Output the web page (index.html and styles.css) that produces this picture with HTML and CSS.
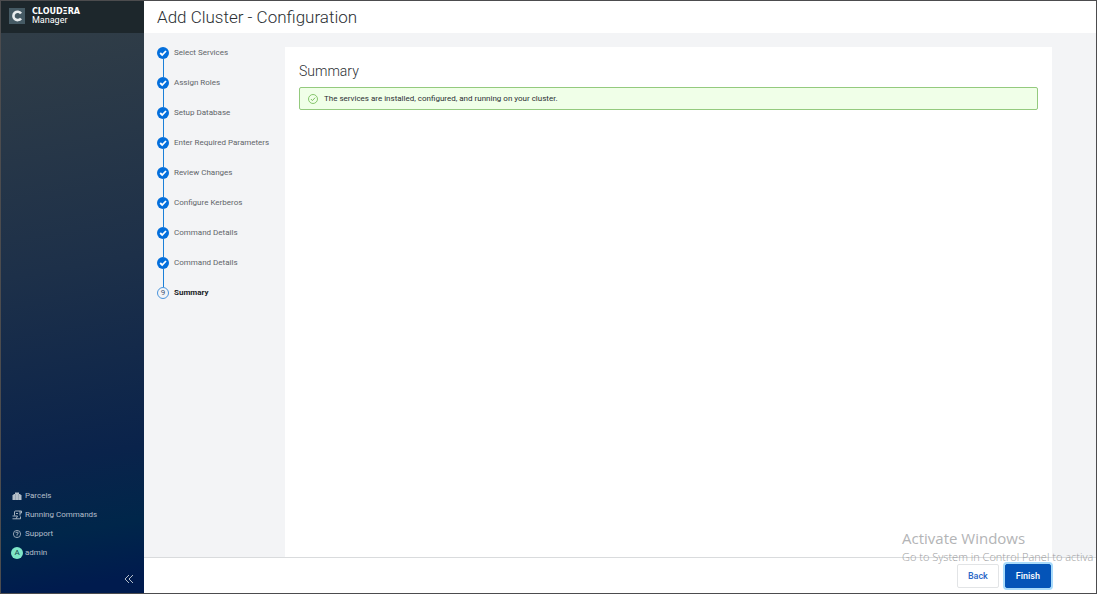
FILE: index.html
```html
<!DOCTYPE html>
<html lang="en">
<head>
<meta charset="utf-8">
<title>Add Cluster - Configuration</title>
<link rel="stylesheet" href="styles.css">
</head>
<body>
<svg class="defs" aria-hidden="true">
  <symbol id="check" viewBox="0 0 12 12"><circle cx="6" cy="6" r="6" fill="#046fdc"/><path d="M3.2 6l2 2 3.8-4" fill="none" stroke="#fff" stroke-width="1.8"/></symbol>
</svg>
<div class="app">
  <aside class="sidebar">
    <div class="brand">
      <svg class="brand-mark" viewBox="0 0 16 16" aria-hidden="true"><rect width="16" height="16" fill="#455a64"/><path d="M12 5.4A4.2 4.2 0 1 0 12 10.4" fill="none" stroke="#e9edef" stroke-width="2.6"/></svg>
      <div class="brand-text"><span class="brand-name">CLOUDΞRA</span><span class="brand-product">Manager</span></div>
    </div>
    <nav class="side-nav">
      <a class="side-link" href="#"><svg class="side-icon" viewBox="0 0 12 12"><path d="M1.5 5h9v5h-9zM2.5 4h7v1h-7zM4 2.5h4V4H4z" fill="#b4bfca"/><path d="M4.5 4V10M7.5 4V10" stroke="#7d8d9e" stroke-width=".5"/></svg>Parcels</a>
      <a class="side-link" href="#"><svg class="side-icon" viewBox="0 0 12 12" fill="none" stroke="#b4bfca"><path d="M3.5 6.5V3Q3.5 2 4.5 2H10.5V4H9M9 2v4.5M1.5 7H6.5L5 9.8H1.5M5 9.8H9.5V7.5M5 4.5h2" stroke-width=".9"/></svg>Running Commands</a>
      <a class="side-link" href="#"><svg class="side-icon" viewBox="0 0 12 12" fill="none" stroke="#b4bfca"><circle cx="6" cy="6" r="3.6" stroke-width=".8"/><path d="M4.7 5.1Q4.8 4.1 6 4.1T7.3 5.1Q7.3 5.8 6 6.3V7M6 7.4v.8" stroke-width=".9"/></svg>Support</a>
      <a class="side-link" href="#"><span class="avatar">A</span>admin</a>
    </nav>
    <button class="collapse" aria-label="Collapse sidebar"><svg viewBox="0 0 10 10" fill="none" stroke="#b4bfca"><path d="M5 1L1 5l4 4M9 1L5 5l4 4"/></svg></button>
  </aside>
  <div class="main">
    <header class="page-header"><h1 class="page-title">Add Cluster - Configuration</h1></header>
    <div class="content">
      <ol class="steps">
        <li class="step"><svg class="step-icon"><use href="#check"/></svg>Select Services</li>
        <li class="step"><svg class="step-icon"><use href="#check"/></svg>Assign Roles</li>
        <li class="step"><svg class="step-icon"><use href="#check"/></svg>Setup Database</li>
        <li class="step"><svg class="step-icon"><use href="#check"/></svg>Enter Required Parameters</li>
        <li class="step"><svg class="step-icon"><use href="#check"/></svg>Review Changes</li>
        <li class="step"><svg class="step-icon"><use href="#check"/></svg>Configure Kerberos</li>
        <li class="step"><svg class="step-icon"><use href="#check"/></svg>Command Details</li>
        <li class="step"><svg class="step-icon"><use href="#check"/></svg>Command Details</li>
        <li class="step step-current" aria-current="step"><span class="step-number">9</span>Summary</li>
      </ol>
      <main class="card">
        <h2 class="card-title">Summary</h2>
        <div class="alert" role="status"><svg class="alert-icon" viewBox="0 0 10 10" fill="none" stroke="#7cbf60"><circle cx="5" cy="5" r="4.5" stroke-width=".9"/><path d="M2.9 5l1.5 1.6 2.8-3"/></svg>The services are installed, configured, and running on your cluster.</div>
      </main>
    </div>
    <footer class="footer">
      <button class="btn">Back</button>
      <button class="btn btn-primary">Finish</button>
    </footer>
  </div>
  <div class="watermark"><span class="watermark-title">Activate Windows</span><span class="watermark-text">Go to System in Control Panel to activa</span></div>
</div>
</body>
</html>
```
FILE: styles.css
```css
* { box-sizing: border-box; }
body { margin: 0; font-family: Roboto, "Liberation Sans", sans-serif; font-size: 8px; line-height: 12px; color: #2b2f33; }
button { font: inherit; cursor: pointer; }
.defs { display: none; }
.app { position: relative; display: flex; min-height: 100vh; border: 1px solid #4c4c4e; overflow: hidden; }
.sidebar { display: flex; flex-direction: column; flex: 0 0 143px; background: linear-gradient(170deg, #303d47 6%, #1d3049 45%, #0a234b 76%, #00264a 88%, #001b4e 97%); }
.brand { display: flex; align-items: center; gap: 7px; height: 32px; padding: 0 8px 2px; background: #1d272c; color: #fff; }
.brand-mark { width: 16px; height: 16px; }
.brand-text { display: flex; flex-direction: column; line-height: 9px; }
.brand-name { font: bold 8px/9px "DejaVu Sans", sans-serif; }
.brand-product { font-size: 9px; }
.side-nav { display: flex; flex-direction: column; margin-top: auto; padding: 0 10px; }
.side-link { display: flex; align-items: center; gap: 2px; height: 19px; color: #b4bfca; font-size: 8px; text-decoration: none; }
.side-icon { width: 12px; height: 12px; }
.avatar { width: 12px; height: 12px; border-radius: 50%; background: #7ee6c8; color: #15454c; text-align: center; }
.collapse { align-self: flex-end; width: 10px; height: 10px; margin: 12px 10px 9px; padding: 0; border: 0; background: none; }
.collapse svg { display: block; }
.main { display: flex; flex: 1; flex-direction: column; min-width: 0; background: #f3f4f6; }
.page-header { display: flex; align-items: center; height: 32px; padding: 0 13px; background: #fff; }
.page-title { margin: 0; font-size: 17px; font-weight: 300; line-height: 22px; }
.content { display: flex; flex: 1; padding: 14px 44px 0 13px; }
.steps { flex: 0 0 128px; margin: 0; padding: 0; list-style: none; color: #5f6469; }
.step { position: relative; display: flex; align-items: center; gap: 5px; height: 12px; margin-bottom: 18px; white-space: nowrap; }
.step:not(:last-child)::after { content: ""; position: absolute; top: 12px; left: 6px; width: 1px; height: 18px; background: #1a7fd8; }
.step-icon { width: 12px; height: 12px; }
.step-current { color: #202326; font-weight: 700; }
.step-number { width: 12px; height: 12px; border: 1px solid #4a94dc; border-radius: 50%; color: #3c5877; font-weight: 400; line-height: 10px; text-align: center; }
.card { flex: 1; padding: 14px; background: #fff; }
.card-title { margin: 0 0 6px; font-size: 14px; font-weight: 300; line-height: 20px; }
.alert { display: flex; align-items: center; gap: 6px; height: 23px; padding: 0 8px; border: 1px solid #94ca7e; border-radius: 2px; background: #f0ffe8; }
.alert-icon { width: 10px; height: 10px; }
.footer { display: flex; align-items: center; justify-content: flex-end; gap: 6px; height: 36px; padding: 0 45px; border-top: 1px solid #d9dbdd; background: #fff; }
.btn { height: 24px; padding: 0 10px; border: 1px solid #e2e4e6; border-radius: 2px; background: #fff; color: #2966c7; font-size: 9px; font-weight: 500; }
.btn-primary { border-color: #0454b8; background: #0454b8; color: #fff; box-shadow: 0 0 0 2px #a9dbfa; }
.watermark { position: absolute; left: calc(100% - 194px); bottom: 28px; display: flex; flex-direction: column; gap: 1px; color: #b3b4b6; font-family: "Open Sans", "Noto Sans", sans-serif; white-space: nowrap; pointer-events: none; }
.watermark-title { font-size: 15px; line-height: 20px; }
.watermark-text { color: #9b9c9e; font-size: 11px; font-weight: 300; line-height: 16px; }
```
